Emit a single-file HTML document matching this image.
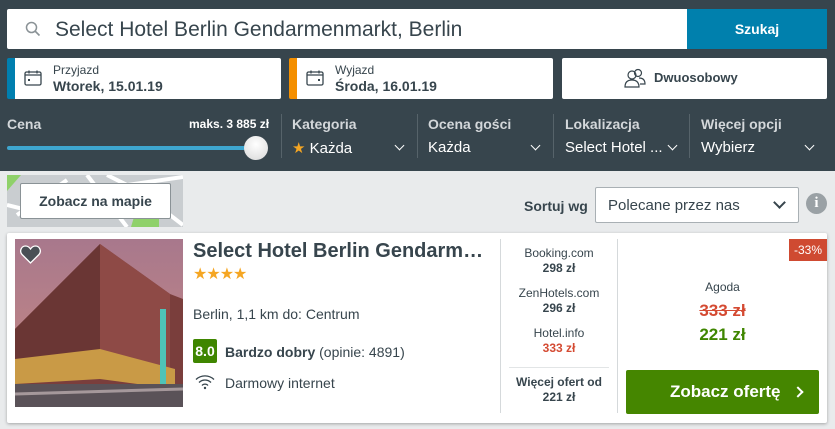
<!DOCTYPE html>
<html><head><meta charset="utf-8"><style>
*{box-sizing:border-box;margin:0;padding:0}
body{width:835px;height:429px;overflow:hidden;background:#e9ebec;font-family:"Liberation Sans",Arial,sans-serif;position:relative;color:#37454d}
.a{position:absolute}
.hdr{left:0;top:0;width:835px;height:171px;background:#37454d}
.w{background:#fff;border-radius:2px}
.lbl{color:#d3d7da;font-weight:bold;font-size:14px}
.val{color:#fff;font-size:15px}
.dv{width:1px;background:#56636a;top:114px;height:44px}
.chev{width:7px;height:7px;border-right:1.6px solid #fff;border-bottom:1.6px solid #fff;transform:rotate(45deg)}
</style></head><body>
<div class="a hdr"></div>
<div class="a w" style="left:7px;top:9px;width:681px;height:40px;border-radius:2px 0 0 2px"></div>
<svg class="a" style="left:25px;top:21px" width="16" height="16" viewBox="0 0 16 16"><circle cx="6.5" cy="6.5" r="5" fill="none" stroke="#8a9296" stroke-width="1.5"/><path d="M10 10l4.5 4.5" stroke="#8a9296" stroke-width="1.6"/></svg>
<div class="a" style="left:55px;top:18px;font-size:21px;color:#37454d">Select Hotel Berlin Gendarmenmarkt, Berlin</div>
<div class="a" style="left:687px;top:9px;width:140px;height:40px;background:#0080ad;color:#fff;font-weight:bold;font-size:14px;text-align:center;line-height:40px">Szukaj</div>

<div class="a w" style="left:7px;top:58px;width:274px;height:41px;border-left:8px solid #007faf"></div>
<svg class="a" style="left:24px;top:70px" width="18" height="16" viewBox="0 0 18 16"><rect x="1" y="2" width="16" height="13" rx="1.5" fill="none" stroke="#37454d" stroke-width="1.3"/><path d="M1 5h16M5 0.5v3M13 0.5v3" stroke="#37454d" stroke-width="1.3"/><rect x="4" y="9" width="2" height="2" fill="#37454d"/></svg>
<div class="a" style="left:53px;top:63px;font-size:12px;color:#37454d">Przyjazd</div>
<div class="a" style="left:53px;top:78px;font-size:14px;font-weight:bold;color:#37454d">Wtorek, 15.01.19</div>

<div class="a w" style="left:289px;top:58px;width:264px;height:41px;border-left:8px solid #f48f00"></div>
<svg class="a" style="left:306px;top:70px" width="18" height="16" viewBox="0 0 18 16"><rect x="1" y="2" width="16" height="13" rx="1.5" fill="none" stroke="#37454d" stroke-width="1.3"/><path d="M1 5h16M5 0.5v3M13 0.5v3" stroke="#37454d" stroke-width="1.3"/><rect x="12" y="9" width="2" height="2" fill="#37454d"/></svg>
<div class="a" style="left:335px;top:63px;font-size:12px;color:#37454d">Wyjazd</div>
<div class="a" style="left:335px;top:78px;font-size:14px;font-weight:bold;color:#37454d">Środa, 16.01.19</div>

<div class="a w" style="left:562px;top:58px;width:265px;height:41px"></div>
<svg class="a" style="left:624px;top:68px" width="22" height="20" viewBox="0 0 22 20"><circle cx="8" cy="7" r="4" fill="none" stroke="#37454d" stroke-width="1.2"/><path d="M1 19c0-5 3-7 7-7s7 2 7 7z" fill="none" stroke="#37454d" stroke-width="1.2"/><circle cx="14" cy="5" r="3.5" fill="none" stroke="#37454d" stroke-width="1.2"/><path d="M15 10c4 0 6 2 6 6h-5" fill="none" stroke="#37454d" stroke-width="1.2"/></svg>
<div class="a" style="left:654px;top:70px;font-size:13px;font-weight:bold;color:#37454d">Dwuosobowy</div>

<div class="a lbl" style="left:7px;top:116px">Cena</div>
<div class="a" style="left:189px;top:117px;font-size:12px;font-weight:bold;color:#fff">maks. 3 885 zł</div>
<div class="a" style="left:7px;top:146px;width:250px;height:4px;background:#3ea6cf;border-radius:2px"></div>
<div class="a" style="left:244px;top:136px;width:24px;height:24px;border-radius:50%;background:radial-gradient(circle at 50% 35%,#fff,#d8d8d8)"></div>
<div class="a dv" style="left:281px"></div>
<div class="a dv" style="left:417px"></div>
<div class="a dv" style="left:553px"></div>
<div class="a dv" style="left:689px"></div>
<div class="a lbl" style="left:292px;top:116px">Kategoria</div>
<div class="a val" style="left:292px;top:139px"><span style="color:#f5a623">★</span> Każda</div>
<div class="a chev" style="left:396px;top:142px"></div>
<div class="a lbl" style="left:428px;top:116px">Ocena gości</div>
<div class="a val" style="left:428px;top:139px">Każda</div>
<div class="a chev" style="left:532px;top:142px"></div>
<div class="a lbl" style="left:565px;top:116px">Lokalizacja</div>
<div class="a val" style="left:565px;top:139px">Select Hotel ...</div>
<div class="a chev" style="left:669px;top:142px"></div>
<div class="a lbl" style="left:701px;top:116px">Więcej opcji</div>
<div class="a val" style="left:701px;top:139px">Wybierz</div>
<div class="a chev" style="left:806px;top:142px"></div>

<svg class="a" style="left:7px;top:175px" width="176" height="52" viewBox="0 0 176 52"><rect width="176" height="52" fill="#c9cdd0"/><path d="M0 0h14l-14 16z" fill="#8fd16a"/><path d="M124 52l6-20h22v20z" fill="#8fd16a"/><path d="M10 40L60 5M80 0l40 52M120 10l56-8M0 30l40 10M150 30l26 20M100 0l60 30" stroke="#fff" stroke-width="4" fill="none"/></svg>
<div class="a" style="left:20px;top:183px;width:151px;height:36px;background:#fff;border:1px solid #8a9296;border-radius:2px;font-size:14px;font-weight:bold;text-align:center;line-height:34px;color:#37454d">Zobacz na mapie</div>

<div class="a" style="left:524px;top:198px;font-size:14px;font-weight:bold;color:#37454d">Sortuj wg</div>
<div class="a" style="left:595px;top:187px;width:204px;height:36px;background:#fff;border:1px solid #a9b0b4;border-radius:2px"></div>
<div class="a" style="left:608px;top:197px;font-size:15px;color:#37454d">Polecane przez nas</div>
<div class="a chev" style="left:775px;top:198px;border-color:#37454d;width:9px;height:9px;border-width:2px"></div>
<div class="a" style="left:806px;top:193px;width:21px;height:21px;border-radius:50%;background:#9aa1a5;color:#fff;font-weight:bold;font-size:15px;text-align:center;line-height:21px;font-family:'Liberation Serif',serif">i</div>

<div class="a" style="left:7px;top:233px;width:820px;height:190px;background:#fff;border-radius:2px;box-shadow:0 1px 3px rgba(0,0,0,.3)"></div>
<svg class="a" style="left:15px;top:239px" width="168" height="168" viewBox="0 0 168 168">
<defs><linearGradient id="sk" x1="0" y1="0" x2="0" y2="1"><stop offset="0" stop-color="#a8788c"/><stop offset="1" stop-color="#c88a84"/></linearGradient></defs>
<rect width="168" height="168" fill="url(#sk)"/>
<path d="M0 90L85 5 L155 55 L168 60 V168 H0z" fill="#7a3e3c"/>
<path d="M85 5L85 130 L155 150 V55z" fill="#8e4a46"/>
<path d="M0 90L85 5V130L0 140z" fill="#6a3634"/>
<path d="M0 120L85 110L160 130V150L85 140L0 145z" fill="#c99a46"/>
<rect x="145" y="70" width="6" height="75" fill="#4fc3b8"/>
<path d="M0 145h168v23H0z" fill="#5a5258"/>
<path d="M0 155L168 150" stroke="#d8c8c8" stroke-width="3" opacity=".6"/>
</svg>
<svg class="a" style="left:20px;top:245px" width="21" height="19" viewBox="0 0 21 19"><path d="M10.5 18L2 9.5C-1 6 1.5 1 5.5 1c2.3 0 4 1.5 5 3 1-1.5 2.7-3 5-3 4 0 6.5 5 3.5 8.5z" fill="#4a4f55" stroke="#fff" stroke-width="1.3"/></svg>

<div class="a" style="left:193px;top:240px;font-size:20px;font-weight:bold;color:#37454d">Select Hotel Berlin Gendarm…</div>
<div class="a" style="left:193px;top:264px;font-size:16px;color:#f5a623;letter-spacing:-1px">★★★★</div>
<div class="a" style="left:193px;top:306px;font-size:14px;color:#37454d">Berlin, 1,1 km do: Centrum</div>
<div class="a" style="left:193px;top:339px;width:24px;height:24px;background:#3f8600;border-radius:2px;color:#fff;font-weight:bold;font-size:14px;text-align:center;line-height:24px">8.0</div>
<div class="a" style="left:225px;top:344px;font-size:14px;color:#37454d"><b>Bardzo dobry</b> (opinie: 4891)</div>
<svg class="a" style="left:195px;top:374px" width="20" height="16" viewBox="0 0 20 16"><path d="M1 5.5a13 13 0 0 1 18 0M4 8.5a8.5 8.5 0 0 1 12 0M7 11.5a4 4 0 0 1 6 0" fill="none" stroke="#37454d" stroke-width="1.3"/><circle cx="10" cy="14" r="1.2" fill="#37454d"/></svg>
<div class="a" style="left:225px;top:375px;font-size:14px;color:#37454d">Darmowy internet</div>

<div class="a" style="left:500px;top:239px;width:1px;height:174px;background:#d5d9db"></div>
<div class="a" style="left:617px;top:239px;width:1px;height:174px;background:#d5d9db"></div>
<div class="a" style="left:501px;top:246px;width:116px;text-align:center;font-size:12px;line-height:15px;color:#37454d">Booking.com<br><b>298 zł</b></div>
<div class="a" style="left:501px;top:286px;width:116px;text-align:center;font-size:12px;line-height:15px;color:#37454d">ZenHotels.com<br><b>296 zł</b></div>
<div class="a" style="left:501px;top:326px;width:116px;text-align:center;font-size:12px;line-height:15px;color:#37454d">Hotel.info<br><b style="color:#d44a32">333 zł</b></div>
<div class="a" style="left:509px;top:367px;width:100px;height:1px;background:#e2e5e6"></div>
<div class="a" style="left:501px;top:375px;width:116px;text-align:center;font-size:12px;line-height:15px;color:#37454d;font-weight:bold">Więcej ofert od<br>221 zł</div>

<div class="a" style="left:789px;top:239px;width:38px;height:22px;background:#cf4a31;color:#fff;font-size:12px;text-align:center;line-height:22px">-33%</div>
<div class="a" style="left:618px;top:280px;width:209px;text-align:center;font-size:12px;color:#37454d">Agoda</div>
<div class="a" style="left:618px;top:301px;width:209px;text-align:center;font-size:17px;font-weight:bold;color:#d44a32;text-decoration:line-through">333 zł</div>
<div class="a" style="left:618px;top:325px;width:209px;text-align:center;font-size:17px;font-weight:bold;color:#3f8600">221 zł</div>
<div class="a" style="left:626px;top:370px;width:193px;height:44px;background:#458600;border-radius:2px;color:#fff;font-weight:bold;font-size:17px;line-height:44px;padding-left:44px">Zobacz ofertę</div>
<div class="a chev" style="left:794px;top:388px;transform:rotate(-45deg);width:8px;height:8px;border-width:2px"></div>
</body></html>
